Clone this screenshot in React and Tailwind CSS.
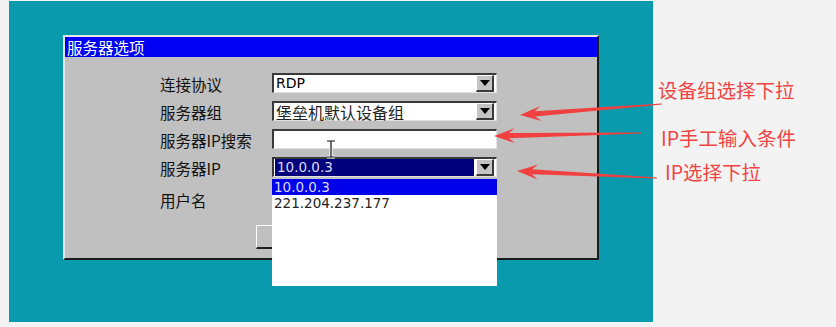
import React from "react";

const UI = { fontFamily: '"DejaVu Sans", "Noto Sans CJK SC", sans-serif' };
const CJK = { fontFamily: '"Noto Sans CJK SC", "DejaVu Sans", sans-serif' };

function DropBtn() {
  return (
    <div className="w-[18px] h-[17px] mr-[2px] shrink-0 bg-[#c4c4c4] border-t border-l border-t-white border-l-white border-b-2 border-r-2 border-b-[#3a3a3a] border-r-[#3a3a3a] flex items-center justify-center">
      <svg width="10" height="6" viewBox="0 0 10 6">
        <polygon points="0,0 10,0 5,6" fill="#000" />
      </svg>
    </div>
  );
}

function Field({ children, drop = true }) {
  return (
    <div className="relative h-[20px] w-[225px] bg-white flex items-start border-t-2 border-l-2 border-t-[#3a3a3a] border-l-[#3a3a3a] border-b border-r border-b-[#e2e2e2] border-r-[#e2e2e2]">
      <div className="flex-1 h-full flex items-center pl-[2px] whitespace-nowrap">{children}</div>
      {drop && <DropBtn />}
    </div>
  );
}

function Arrow({ tx, ty, sx, sy }) {
  const dx = sx - tx;
  const dy = sy - ty;
  const L = Math.hypot(dx, dy);
  const ux = dx / L;
  const uy = dy / L;
  const nx = -uy;
  const ny = ux;
  const hl = 21;
  const hw = 7.5;
  const nl = 15;
  const sw0 = 2.6;
  const sw1 = 0.5;
  const p = (a, b) => `${a.toFixed(1)},${b.toFixed(1)}`;
  const bx = tx + hl * ux;
  const by = ty + hl * uy;
  const nxp = tx + nl * ux;
  const nyp = ty + nl * uy;
  const pts = [
    p(tx, ty),
    p(bx + hw * nx, by + hw * ny),
    p(nxp + sw0 * nx, nyp + sw0 * ny),
    p(sx + sw1 * nx, sy + sw1 * ny),
    p(sx - sw1 * nx, sy - sw1 * ny),
    p(nxp - sw0 * nx, nyp - sw0 * ny),
    p(bx - hw * nx, by - hw * ny),
  ].join(" ");
  return <polygon points={pts} fill="#f0403f" />;
}

export default function App() {
  const labels = ["连接协议", "服务器组", "服务器IP搜索", "服务器IP", "用户名"];
  const labelCls = "text-[15.5px] leading-[22px] text-[#111] whitespace-nowrap";
  return (
    <div className="relative w-[836px] h-[327px] bg-[#f3f3f3] flex overflow-hidden" style={UI}>
      <div className="ml-[9px] mt-[1px] w-[644px] h-[321px] bg-[#0a9aad] pt-[34px] pl-[54px] shrink-0">
        <div className="relative w-[536px] h-[225px] bg-[#c0c0c0] border-t-2 border-l-2 border-t-[#e6e6e6] border-l-[#e6e6e6] border-r-2 border-b-2 border-r-[#1c1c1c] border-b-[#1c1c1c]">
          <div className="h-[20px] bg-[#0000f2] text-white text-[15.5px] leading-[20px] pl-[2px]" style={CJK}>
            服务器选项
          </div>
          <div className="pl-[95px] pt-[16px]">
            <div className="grid grid-cols-[112px_225px] gap-y-[8px] auto-rows-[20px]">
              <div className={labelCls} style={CJK}>{labels[0]}</div>
              <Field>
                <span className="text-[14px] text-black" style={UI}>RDP</span>
              </Field>
              <div className={labelCls} style={CJK}>{labels[1]}</div>
              <Field>
                <span className="text-[16px] text-[#222] leading-[18px]" style={CJK}>堡垒机默认设备组</span>
              </Field>
              <div className={labelCls} style={CJK}>{labels[2]}</div>
              <Field drop={false} />
              <div className={labelCls} style={CJK}>{labels[3]}</div>
              <div className="relative z-10">
                <div className="h-[20px] w-[225px] bg-white flex items-start border-t-2 border-l-2 border-t-[#3a3a3a] border-l-[#3a3a3a] border-b border-r border-b-[#e2e2e2] border-r-[#e2e2e2]">
                  <div className="flex-1 h-[17px] ml-[1px] mr-[2px] bg-[#00007c] flex items-center pl-[2px]">
                    <span className="text-[13.5px] text-[#dcdcff]" style={UI}>10.0.0.3</span>
                  </div>
                  <DropBtn />
                </div>
                <div className="absolute left-0 top-[21px] w-[225px] h-[108px] bg-white border-t border-[#c8c8c8]">
                  <div className="h-[16px] bg-[#0000ea] flex items-center pl-[2px]">
                    <span className="text-[13.5px] text-[#dcdcff]" style={UI}>10.0.0.3</span>
                  </div>
                  <div className="h-[16px] flex items-center pl-[2px]">
                    <span className="text-[13.5px] text-[#222]" style={UI}>221.204.237.177</span>
                  </div>
                </div>
              </div>
              <div className={labelCls + " pt-[4px]"} style={CJK}>{labels[4]}</div>
              <div />
            </div>
            <div className="mt-[20px] ml-[96px] w-[80px] h-[24px] bg-[#c0c0c0] border-t border-l border-t-white border-l-white border-b-2 border-r-2 border-b-[#202020] border-r-[#202020]" />
          </div>
          <svg className="absolute left-[260px] top-[103px] z-20" width="12" height="20" viewBox="0 0 12 20">
            <path d="M2 1 H10 M6 1 V17 M2 17 H10" stroke="#fff" strokeWidth="3" fill="none" />
            <path d="M2 1 H10 M6 1 V17 M2 17 H10" stroke="#111" strokeWidth="1.2" fill="none" />
          </svg>
        </div>
      </div>
      <div className="flex flex-col text-[19.5px] text-[#f04444] leading-[22px]" style={CJK}>
        <div className="mt-[79px] ml-[5px]">设备组选择下拉</div>
        <div className="mt-[26px] ml-[8px]">IP手工输入条件</div>
        <div className="mt-[12px] ml-[12px]">IP选择下拉</div>
      </div>
      <svg className="absolute inset-0 pointer-events-none" width="836" height="327">
        <Arrow tx={520} ty={115} sx={662} sy={104} />
        <Arrow tx={494} ty={136} sx={642} sy={133} />
        <Arrow tx={517} ty={171} sx={657} sy={178} />
      </svg>
    </div>
  );
}
